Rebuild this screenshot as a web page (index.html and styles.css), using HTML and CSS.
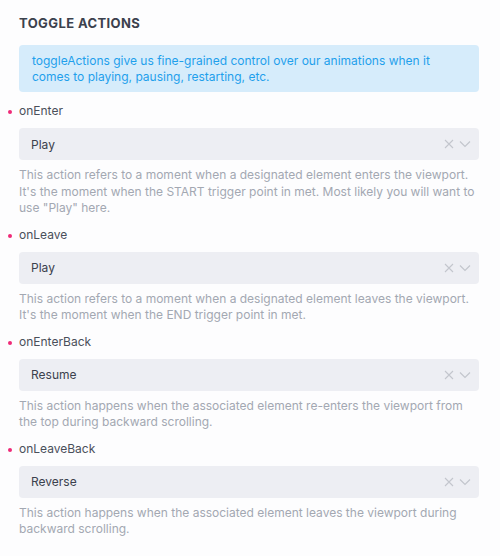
FILE: index.html
```html
<!DOCTYPE html>
<html lang="en">
<head>
  <meta charset="UTF-8">
  <meta name="viewport" content="width=device-width, initial-scale=1.0">
  <title>Toggle Actions</title>
  <link rel="stylesheet" href="styles.css">
</head>
<body>
  <div class="panel">
    <h2 class="title">Toggle Actions</h2>

    <div class="info">toggleActions give us fine-grained control over our animations when it comes to playing, pausing, restarting, etc.</div>

    <!-- onEnter -->
    <div class="field">
      <label class="field-label">onEnter</label>
      <div class="select">
        <span class="select-value">Play</span>
        <span class="select-icons">
          <svg width="10" height="10" viewBox="0 0 10 10"><path d="M1 1l8 8M9 1l-8 8" stroke="#c3c6cd" stroke-width="1.1" fill="none"/></svg>
          <svg width="12" height="8" viewBox="0 0 12 8"><path d="M1 1.5l5 5 5-5" stroke="#c3c6cd" stroke-width="1.2" fill="none"/></svg>
        </span>
      </div>
      <p class="help">This action refers to a moment when a designated element enters the viewport. It's the moment when the START trigger point in met. Most likely you will want to use "Play" here.</p>
    </div>

    <!-- onLeave -->
    <div class="field">
      <label class="field-label">onLeave</label>
      <div class="select">
        <span class="select-value">Play</span>
        <span class="select-icons">
          <svg width="10" height="10" viewBox="0 0 10 10"><path d="M1 1l8 8M9 1l-8 8" stroke="#c3c6cd" stroke-width="1.1" fill="none"/></svg>
          <svg width="12" height="8" viewBox="0 0 12 8"><path d="M1 1.5l5 5 5-5" stroke="#c3c6cd" stroke-width="1.2" fill="none"/></svg>
        </span>
      </div>
      <p class="help">This action refers to a moment when a designated element leaves the viewport. It's the moment when the END trigger point in met.</p>
    </div>

    <!-- onEnterBack -->
    <div class="field">
      <label class="field-label">onEnterBack</label>
      <div class="select">
        <span class="select-value">Resume</span>
        <span class="select-icons">
          <svg width="10" height="10" viewBox="0 0 10 10"><path d="M1 1l8 8M9 1l-8 8" stroke="#c3c6cd" stroke-width="1.1" fill="none"/></svg>
          <svg width="12" height="8" viewBox="0 0 12 8"><path d="M1 1.5l5 5 5-5" stroke="#c3c6cd" stroke-width="1.2" fill="none"/></svg>
        </span>
      </div>
      <p class="help">This action happens when the associated element re-enters the viewport from the top during backward scrolling.</p>
    </div>

    <!-- onLeaveBack -->
    <div class="field">
      <label class="field-label">onLeaveBack</label>
      <div class="select">
        <span class="select-value">Reverse</span>
        <span class="select-icons">
          <svg width="10" height="10" viewBox="0 0 10 10"><path d="M1 1l8 8M9 1l-8 8" stroke="#c3c6cd" stroke-width="1.1" fill="none"/></svg>
          <svg width="12" height="8" viewBox="0 0 12 8"><path d="M1 1.5l5 5 5-5" stroke="#c3c6cd" stroke-width="1.2" fill="none"/></svg>
        </span>
      </div>
      <p class="help">This action happens when the associated element leaves the viewport during backward scrolling.</p>
    </div>
  </div>
</body>
</html>
```

FILE: styles.css
```css
body {
  margin: 0;
  background: #fdfdfe;
  font-family: Inter, "Noto Sans", sans-serif;
  font-size: 12px;
  color: #4a4f5a;
}
.panel {
  padding: 14px 21px 0 19px;
}
.title {
  margin: 0 0 13px;
  font-size: 13px;
  font-weight: 700;
  text-transform: uppercase;
  letter-spacing: 0.4px;
  line-height: 18px;
  color: #3b414d;
}
.info {
  background: #d6ecfb;
  color: #1fa0ec;
  border-radius: 4px;
  padding: 8px 12px 7px 13px;
  line-height: 16px;
}
.field {
  margin-top: 10px;
}
.field + .field {
  margin-top: 9px;
}
.field-label {
  position: relative;
  display: block;
  line-height: 18px;
  margin-bottom: 8px;
}
.field-label::before {
  content: "";
  position: absolute;
  left: -11px;
  top: 8px;
  width: 4px;
  height: 4px;
  border-radius: 50%;
  background: #ef2a78;
}
.select {
  display: flex;
  align-items: center;
  justify-content: space-between;
  height: 32px;
  padding: 0 8px 0 12px;
  background: #edeef3;
  border-radius: 4px;
  color: #3b414d;
}
.select-icons {
  display: flex;
  align-items: center;
  gap: 5px;
}
.select-icons svg {
  display: block;
}
.help {
  margin: 7px 0 0;
  line-height: 16.5px;
  color: #a3a8b2;
}
```
